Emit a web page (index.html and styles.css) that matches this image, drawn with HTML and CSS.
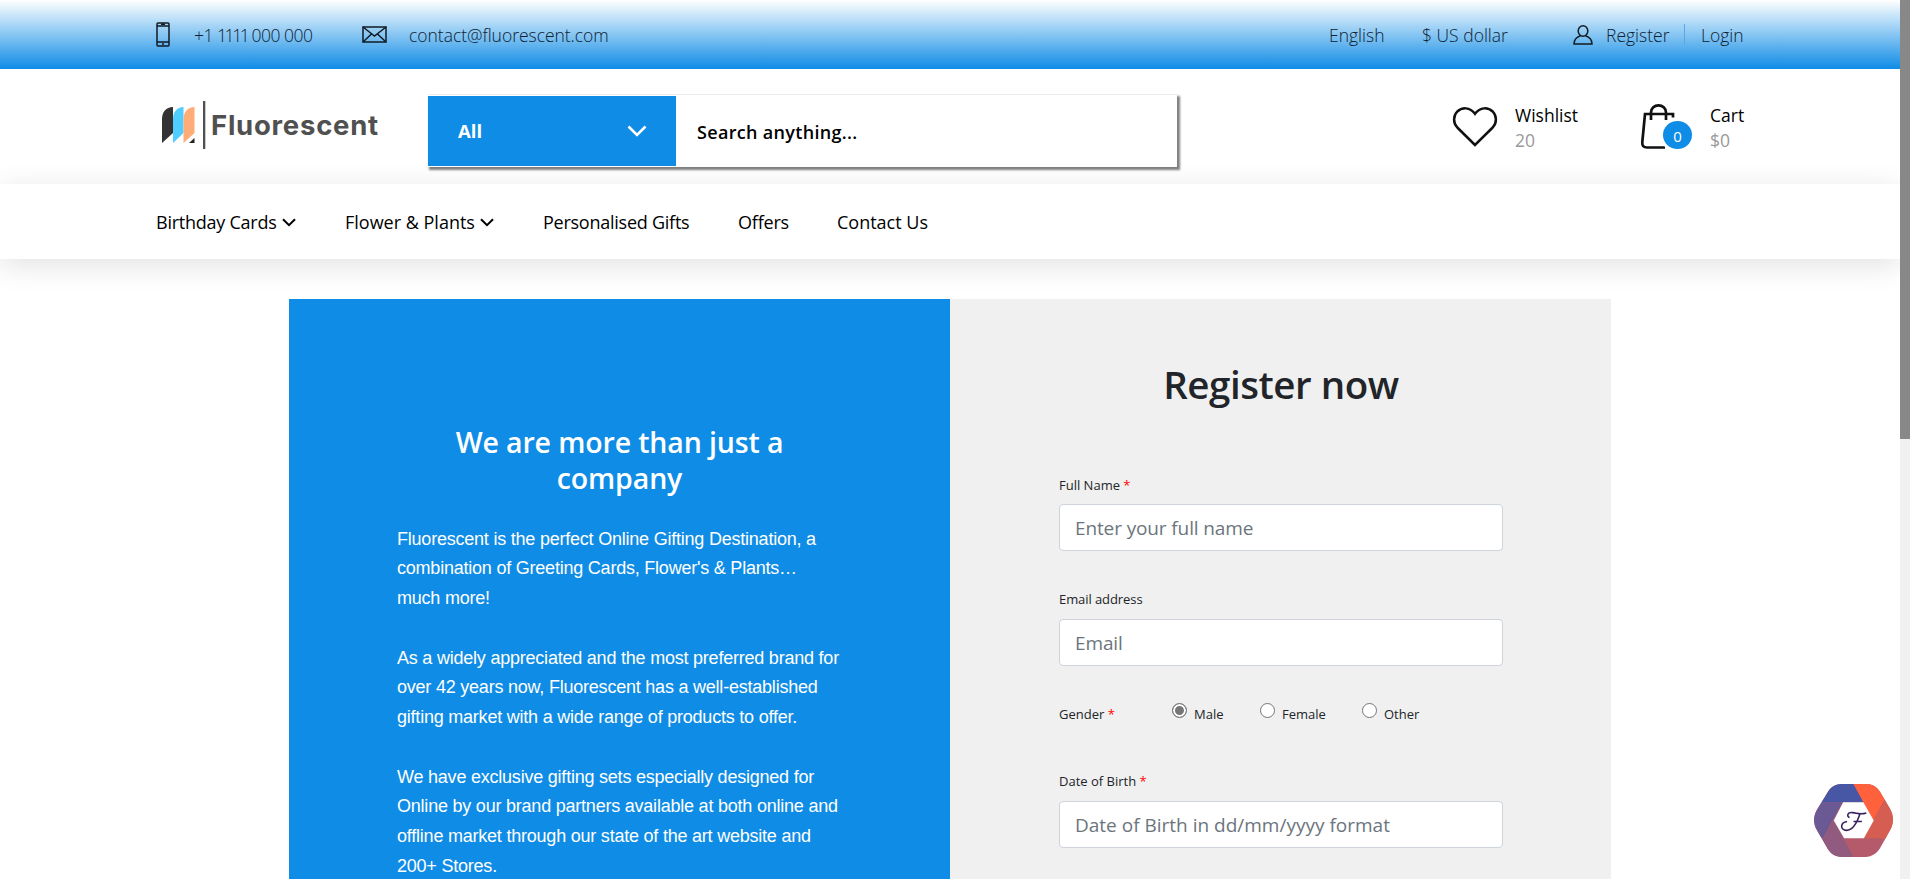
FILE: index.html
```html
<!DOCTYPE html>
<html lang="en">
<head>
<meta charset="utf-8">
<title>Fluorescent - Register</title>
<link rel="stylesheet" href="styles.css">
</head>
<body>
<div class="page">
  <div class="topbar">
    <svg class="ico-phone" viewBox="0 0 14 25" width="14" height="25"><rect x="1" y="1" width="12" height="23" rx="1"/><path d="M1 4h12M1 20h12M5 2.3h4M7 21v2"/></svg>
    <span class="top-text phone">+1 <span class="ones">1111</span> 000 000</span>
    <svg class="ico-mail" viewBox="0 0 25 17" width="25" height="17"><rect x="1" y="1" width="23" height="15"/><path d="M1 1l11.5 9L24 1M1 16l8.5-8M24 16l-8.5-8"/></svg>
    <span class="top-text mail">contact@fluorescent.com</span>
    <span class="top-text english">English</span>
    <span class="top-text dollar">$ US dollar</span>
    <svg class="ico-user" viewBox="0 0 20 20" width="20" height="20"><ellipse cx="10" cy="6" rx="4.8" ry="5.2"/><path d="M7.500 10.700C3.500 12 1 15 1 19h18c0-4-2.500-7-6.500-8.300"/></svg>
    <span class="top-text register">Register</span>
    <i class="divider"></i>
    <span class="top-text login">Login</span>
  </div>

  <header class="header">
    <div class="logo">
      <svg viewBox="0 0 44 48" width="44" height="48"><path fill="#333" d="M0 42V18C0 11 4 6 11 6v26z"/><path fill="#50ceff" d="M11 42V18c0-7 4-12 10.500-12v26z"/><path fill="#ffad78" d="M21.500 42V18c0-7 4-12 11-12v26z"/><path fill="#222" d="M32.500 37v5h-5.500z"/><path fill="#505050" d="M41 0h2.300v48H41z"/></svg>
      <span class="brand">Fluorescent</span>
    </div>
    <div class="search">
      <div class="category"><span>All</span><svg viewBox="0 0 20 12" width="20" height="12"><path d="M1.500 1.500l8.500 8.500 8.500-8.500"/></svg></div>
      <div class="query">Search anything...</div>
    </div>
    <div class="wishlist">
      <svg viewBox="0 0 44 40" width="44" height="40"><path d="M22 38L4.300 20.500C-.3 15.700.4 8.500 4.300 4.500 9 .1 16.800-.2 22 6.800 27.200-.2 35 .1 39.700 4.500c3.900 4 4.600 11.200 0 16z"/></svg>
      <div class="stat"><span>Wishlist</span><span class="sub">20</span></div>
    </div>
    <div class="cart">
      <div class="bag">
        <svg viewBox="0 0 34 45" width="34" height="45"><path d="M32 13.500V10H4L1.300 38c-.3 3.800 1.200 5.500 4.700 5.500h18M10 16V8.500C10 4 13.500 1.300 17.500 1.300S25 4 25 8.500V16"/></svg>
        <span class="badge">0</span>
      </div>
      <div class="stat"><span>Cart</span><span class="sub">$0</span></div>
    </div>
  </header>

  <nav class="nav">
    <a class="n1"><span>Birthday Cards</span><svg viewBox="0 0 14 9" width="14" height="9"><path d="M1 1.200l6 6 6-6"/></svg></a>
    <a class="n2"><span>Flower &amp; Plants</span><svg viewBox="0 0 14 9" width="14" height="9"><path d="M1 1.200l6 6 6-6"/></svg></a>
    <a class="n3">Personalised Gifts</a>
    <a class="n4">Offers</a>
    <a class="n5">Contact Us</a>
  </nav>

  <main class="main">
    <section class="about">
      <h2>We are more than just a<br>company</h2>
      <p>Fluorescent is the perfect Online Gifting Destination, a<br>combination of Greeting Cards, Flower's &amp; Plants…<br>much more!</p>
      <p>As a widely appreciated and the most preferred brand for<br>over 42 years now, Fluorescent has a well-established<br>gifting market with a wide range of products to offer.</p>
      <p>We have exclusive gifting sets especially designed for<br>Online by our brand partners available at both online and<br>offline market through our state of the art website and<br>200+ Stores.</p>
    </section>
    <section class="form">
      <h1>Register now</h1>
      <label>Full Name <b>*</b></label>
      <div class="input tight">Enter your full name</div>
      <label class="second">Email address</label>
      <div class="input tight">Email</div>
      <div class="gender">
        <span class="g-label">Gender <b>*</b></span>
        <span class="opt o1"><i class="radio on"></i><span>Male</span></span>
        <span class="opt o2"><i class="radio"></i><span>Female</span></span>
        <span class="opt o3"><i class="radio"></i><span>Other</span></span>
      </div>
      <label class="dob">Date of Birth <b>*</b></label>
      <div class="input">Date of Birth in dd/mm/yyyy format</div>
    </section>
  </main>
</div>
<div class="scrollbar"><div class="thumb"></div></div>
<svg class="float" viewBox="0 0 80 74" width="79" height="73">
  <defs><clipPath id="hex"><path d="M28 0h25c6 0 11 3 14 8l10 17c4 7 4 15 0 22L67 65c-3 5-8 9-15 9H28c-6 0-11-3-14-8L3 47c-4-7-4-14 0-21L14 8C17 3 22 0 28 0z"/></clipPath></defs>
  <g clip-path="url(#hex)">
    <path fill="#b55a6b" d="M0 0h80v74H0z"/>
    <path fill="#4857a5" d="M0 18.500V0h40l11 18.500z"/>
    <path fill="#ff613d" d="M40 0h40L60 37z"/>
    <path fill="#d65d52" d="M71 18l9-18v74l-10-19H50z"/>
    <path fill="#6b5994" d="M0 18.500h29L9 55H0z"/>
    <path fill="#915b80" d="M20 37l20 37H0V70z"/>
    <path fill="#fff" d="M29.500 18.500h20.500L60.500 37 50.500 55H30.500L20 37z"/>
  </g>
  <path class="script" d="M36 34c-3-1-2.500-5.500 3-5 5 .5 8 2.300 14 .3M46.500 30.500C44 38 40 47 33 47c-7-.3-6.500-8 .5-9M40 38h8.500"/>
</svg>
</body>
</html>
```
FILE: styles.css
```css
* { box-sizing: border-box; }
body { margin: 0; height: 879px; overflow: hidden; background: #fff; font-family: "Open Sans", sans-serif; color: #000; }
svg { display: block; flex: none; fill: none; overflow: visible; }
span { white-space: nowrap; }
.page { width: 1900px; height: 879px; overflow: hidden; }

.topbar { display: flex; height: 69px; background: linear-gradient(#fff, #0f8ce6); padding-left: 156px; align-items: flex-start; }
.topbar svg { stroke: #111b24; stroke-width: 1.5; }
.top-text { font-size: 17.5px; font-weight: 300; line-height: 24px; padding-top: 23px; color: #0d2233; }
.ico-phone { margin-top: 22px; }
.phone { margin-left: 24px; width: 168px; letter-spacing: -0.5px; }
.ones { letter-spacing: -2.4px; }
.ico-mail { margin-top: 26px; }
.mail { margin-left: 22px; width: 920px; letter-spacing: -0.03px; }
.english { width: 93px; }
.dollar { width: 151px; }
.ico-user { margin-top: 25px; }
.register { margin-left: 13px; width: 78px; }
.divider { width: 1px; height: 21px; background: #5ea6df; margin: 24px 16px 0 0; }

.header { display: flex; height: 115px; padding-left: 162px; align-items: flex-start; }
.logo { display: flex; margin-top: 32px; width: 266px; }
.brand { font-family: Inter, sans-serif; font-weight: 700; font-size: 27.5px; letter-spacing: 0.75px; line-height: 49px; color: #505050; margin-left: 5px; }
.search { display: flex; width: 749px; height: 72px; margin-top: 26px; padding: 1px 0; background: #fff; box-shadow: 2px 2px 2px 1px gray, 0 -1px 0 #f5f5f5; }
.category { width: 248px; height: 70px; background: #0f8ce6; color: #fff; font-weight: 700; font-size: 18.5px; line-height: 72px; padding: 0 29px 0 30px; display: flex; justify-content: space-between; align-items: center; }
.category svg { stroke: #fff; stroke-width: 2.6; }
.query { padding-left: 21px; font-weight: 600; font-size: 18px; letter-spacing: 0.32px; line-height: 72px; }
.wishlist, .cart { display: flex; }
.wishlist { margin: 38px 0 0 276px; width: 188px; }
.wishlist > svg { stroke: #111; stroke-width: 2.5; }
.stat { display: flex; flex-direction: column; font-size: 17.5px; line-height: 25px; margin-left: 18px; margin-top: -4px; }
.sub { color: #999; }
.cart { margin-top: 35px; }
.bag { position: relative; width: 51px; }
.bag svg { stroke: #111; stroke-width: 2.7; }
.cart .stat { margin-top: -1px; }
.badge { position: absolute; left: 22px; top: 17px; width: 29px; height: 28px; border-radius: 50%; background: #0f8ce6; color: #fff; font-size: 15px; line-height: 31px; text-align: center; box-shadow: 0 0 0 3px #fff; }

.nav { position: relative; display: flex; height: 75px; padding-left: 156px; background: #fff; box-shadow: 0 6px 30px rgba(0,0,0,.12); font-size: 18px; line-height: 76px; }
.nav a { display: flex; align-items: center; justify-content: space-between; white-space: nowrap; }
.nav svg { stroke: #000; stroke-width: 2; margin-top: 2px; }
.n1, .n3 { letter-spacing: -0.25px; }
.n1 { width: 140px; margin-right: 49px; }
.n2 { width: 149px; margin-right: 49px; }
.n3 { width: 146px; margin-right: 49px; }
.n4 { width: 51px; margin-right: 48px; letter-spacing: -0.2px; }

.main { display: flex; margin: 40px 0 0 289px; width: 1322px; height: 600px; }
.about { width: 661px; background: #0f8ce6; color: #fff; padding: 125px 108px 0; }
.about h2 { margin: 0 0 28.5px; text-align: center; font-size: 28.5px; letter-spacing: -0.13px; line-height: 36px; font-weight: 600; }
.about p { margin: 0 0 29.75px; font-family: "Liberation Sans", sans-serif; font-size: 18px; letter-spacing: -0.22px; line-height: 29.75px; white-space: nowrap; }
.form { width: 661px; background: #f0f0f0; padding: 60px 108px 0 109px; color: #212529; }
.form h1 { margin: 0; text-align: center; font-size: 38.5px; letter-spacing: -0.45px; font-weight: 600; line-height: 50px; }
.form label, .gender { display: block; font-size: 13px; line-height: 20px; }
.form b { color: red; font-weight: 400; }
.form label { margin: 66px 0 9px; }
.input { height: 47px; background: #fff; border: 1px solid #ced4da; border-radius: 4px; padding-left: 15px; font-size: 19px; line-height: 47px; color: #6c757d; }
.tight { letter-spacing: -0.12px; }
.form label.second { margin-top: 38px; margin-bottom: 10px; letter-spacing: -0.08px; }
.gender { display: flex; margin-top: 38px; height: 20px; }
.g-label { width: 113px; }
.opt { display: flex; gap: 7px; }
.o1 { width: 88px; } .o2 { width: 102px; }
.radio { width: 15px; height: 15px; border-radius: 50%; background: #fff; border: 1px solid #767676; margin-top: -1px; }
.radio.on { background: #767676; box-shadow: inset 0 0 0 2px #fff; }
.form label.dob { margin-top: 47px; margin-bottom: 10px; }

.scrollbar { position: fixed; right: 0; top: 0; width: 10px; height: 879px; background: #f1f1f1; }
.thumb { height: 439px; background: #888; }
.float { position: fixed; left: 1814px; top: 784px; }
.script { stroke: #38235e; stroke-width: 1.6; }
```
